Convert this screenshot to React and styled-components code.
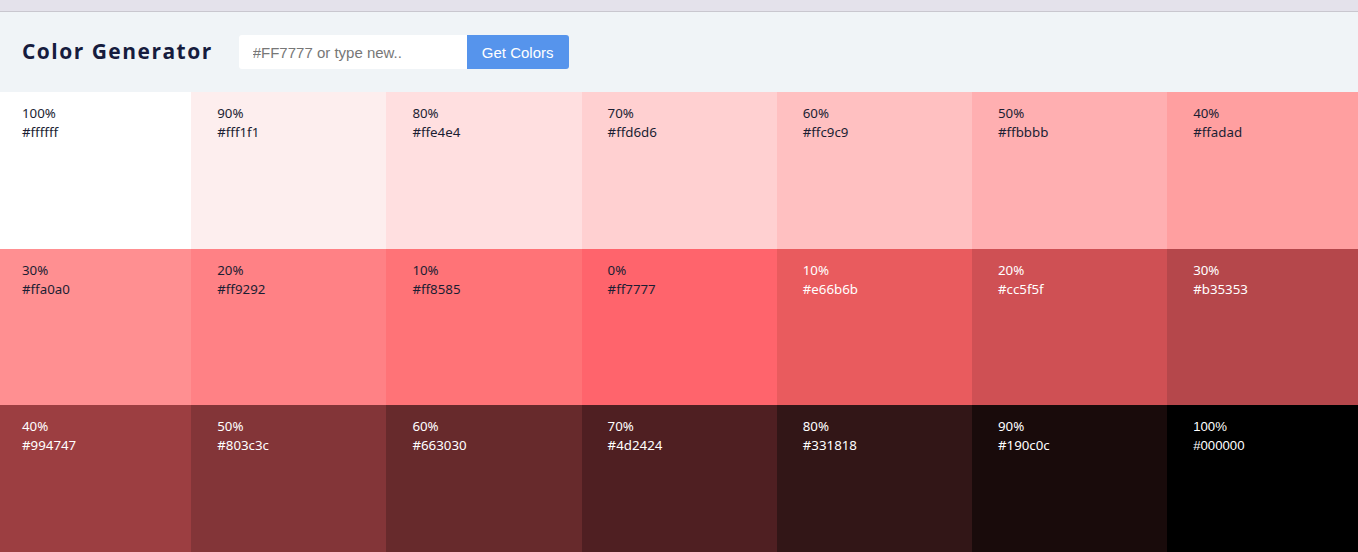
import React from "react";
import styled, { createGlobalStyle } from "styled-components";

// [weight, hex label, colour as it shows on screen]
const colors = [
  ["100%", "#ffffff", "#ffffff", false],
  ["90%", "#fff1f1", "#fdeeee", false],
  ["80%", "#ffe4e4", "#ffdfe0", false],
  ["70%", "#ffd6d6", "#ffd0d1", false],
  ["60%", "#ffc9c9", "#ffc0c1", false],
  ["50%", "#ffbbbb", "#ffafb1", false],
  ["40%", "#ffadad", "#ff9fa0", false],
  ["30%", "#ffa0a0", "#ff8f91", false],
  ["20%", "#ff9292", "#ff8185", false],
  ["10%", "#ff8585", "#ff7377", false],
  ["0%", "#ff7777", "#ff646c", false],
  ["10%", "#e66b6b", "#e95b5e", true],
  ["20%", "#cc5f5f", "#cf5054", true],
  ["30%", "#b35353", "#b5474b", true],
  ["40%", "#994747", "#9c3e41", true],
  ["50%", "#803c3c", "#833538", true],
  ["60%", "#663030", "#672a2c", true],
  ["70%", "#4d2424", "#4f1f22", true],
  ["80%", "#331818", "#321617", true],
  ["90%", "#190c0c", "#190b0b", true],
  ["100%", "#000000", "#000000", true],
];

function App() {
  return (
    <>
      <GlobalStyle />
      <TopStrip />
      <Header>
        <Title>Color Generator</Title>
        <Form onSubmit={(e) => e.preventDefault()}>
          <Input type="text" placeholder="#FF7777 or type new.." />
          <Button type="submit">Get Colors</Button>
        </Form>
      </Header>
      <GridClip>
        <Grid>
          {colors.map(([weight, hex, shown, light], i) => (
            <Swatch key={i} $bg={shown} $light={light} $last={i === colors.length - 1}>
              <p>{weight}</p>
              <p>{hex}</p>
            </Swatch>
          ))}
        </Grid>
      </GridClip>
    </>
  );
}

const GlobalStyle = createGlobalStyle`
  body {
    margin: 0;
    font-family: "Noto Sans", sans-serif;
    overflow: hidden;
  }
`;

const TopStrip = styled.div`
  height: 11px;
  background: #e4e2eb;
  border-bottom: 1px solid #c9c7cf;
`;

const Header = styled.header`
  height: 80px;
  background: #f0f4f7;
  display: flex;
  align-items: center;
  padding: 0 22px;
  gap: 26px;
`;

const Title = styled.h3`
  margin: 0;
  color: #161c3e;
  font-family: "Open Sans", sans-serif;
  font-weight: 700;
  font-size: 21px;
  letter-spacing: 1.48px;
  position: relative;
  top: -1px;
`;

const Form = styled.form`
  display: flex;
`;

const Input = styled.input`
  width: 228px;
  height: 34px;
  box-sizing: border-box;
  border: none;
  border-radius: 3px 0 0 3px;
  background: #fff;
  padding: 0 14px;
  font-family: "Liberation Sans", Arial, sans-serif;
  font-size: 15px;
  outline: none;

  &::placeholder {
    color: #777;
  }
`;

const Button = styled.button`
  width: 102px;
  height: 34px;
  border: none;
  border-radius: 0 3px 3px 0;
  background: #5694ec;
  color: #fff;
  font-family: "Liberation Sans", Arial, sans-serif;
  font-size: 15px;
  cursor: pointer;
`;

const GridClip = styled.main`
  overflow: hidden;
`;

const Grid = styled.section`
  display: grid;
  grid-template-columns: repeat(7, 195.2px);
  grid-auto-rows: 156.5px;
  margin-left: -4px;
`;

const Swatch = styled.article`
  background: ${(p) => p.$bg};
  color: ${(p) => (p.$light ? "#ffffff" : "#1b1e33")};
  padding: 12px 26px;
  font-family: ${(p) => (p.$last ? '"Liberation Sans", Arial, sans-serif' : '"Noto Sans", sans-serif')};
  font-size: ${(p) => (p.$last ? "13.2px" : "13.3px")};

  p {
    margin: 0;
    line-height: 19px;
  }
`;

export default App;
